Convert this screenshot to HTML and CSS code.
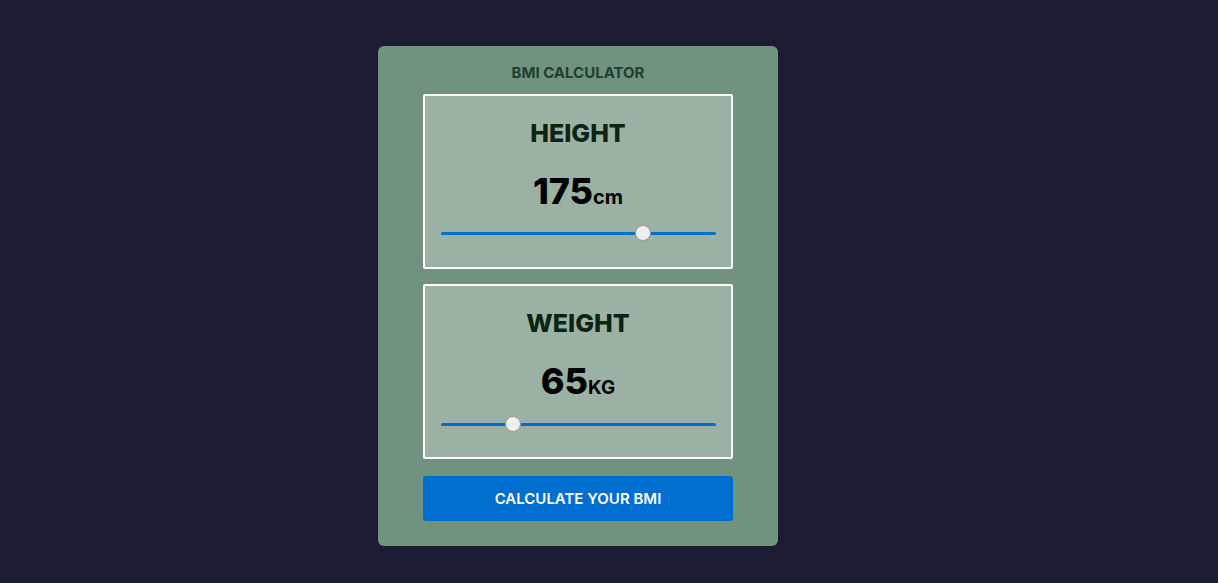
FILE: index.html
```html
<!DOCTYPE html>
<html>
<head>
<meta charset="utf-8">
<link rel="stylesheet" href="styles.css">
</head>
<body>
<div class="page">
  <div class="card">
    <h1 class="title">BMI CALCULATOR</h1>
    <div class="box">
      <h2 class="label">HEIGHT</h2>
      <div class="value">175<span class="unit">cm</span></div>
      <input class="slider" type="range" min="100" max="200" value="175">
    </div>
    <div class="box">
      <h2 class="label">WEIGHT</h2>
      <div class="value">65<span class="unit unit-kg">KG</span></div>
      <input class="slider" type="range" min="40" max="140" value="65">
    </div>
    <button class="calc">CALCULATE YOUR BMI</button>
  </div>
</div>
</body>
</html>
```
FILE: styles.css
```css
* { box-sizing: border-box; }
html, body { margin: 0; padding: 0; }
body {
  background: #1c1b33;
  font-family: "Inter", "Open Sans", sans-serif;
  width: 1218px;
  height: 583px;
}
.page {
  display: flex;
  justify-content: center;
  padding-top: 46px;
  padding-right: 62px;
}
.card {
  width: 400px;
  height: 500px;
  background: #71927f;
  border-radius: 6px;
  padding: 18px 45px 0;
  display: flex;
  flex-direction: column;
}
.title {
  margin: 0 0 12px;
  font-size: 15px;
  line-height: 18px;
  font-weight: 700;
  color: #1f3f2e;
  text-align: center;
}
.box {
  height: 175px;
  background: #9bb1a4;
  border: 2px solid #ffffff;
  border-radius: 2px;
  display: flex;
  flex-direction: column;
  align-items: center;
  padding: 20px 16px 0;
  margin-bottom: 15px;
}
.label {
  margin: 0;
  font-size: 25px;
  line-height: 34px;
  font-weight: 800;
  color: #0b2414;
}
.value {
  margin-top: 21px;
  font-size: 36px;
  line-height: 40px;
  font-weight: 800;
  color: #000;
}
.unit {
  font-size: 20px;
  font-weight: 700;
}
.unit-kg { font-size: 19px; }
.slider {
  -webkit-appearance: none;
  appearance: none;
  width: 275px;
  height: 16px;
  margin: 8px 0 0;
  background: transparent;
}
.slider::-webkit-slider-runnable-track {
  height: 3px;
  background: #0070d0;
  border-radius: 2px;
}
.slider::-webkit-slider-thumb {
  -webkit-appearance: none;
  width: 16px;
  height: 16px;
  border-radius: 50%;
  background: #efefef;
  border: 1px solid #9a9a9a;
  margin-top: -6.5px;
}
.calc {
  margin-top: 2px;
  height: 45px;
  border: none;
  border-radius: 3px;
  background: #006ecf;
  color: #fff;
  font-family: inherit;
  font-size: 15px;
  font-weight: 600;
}
```
